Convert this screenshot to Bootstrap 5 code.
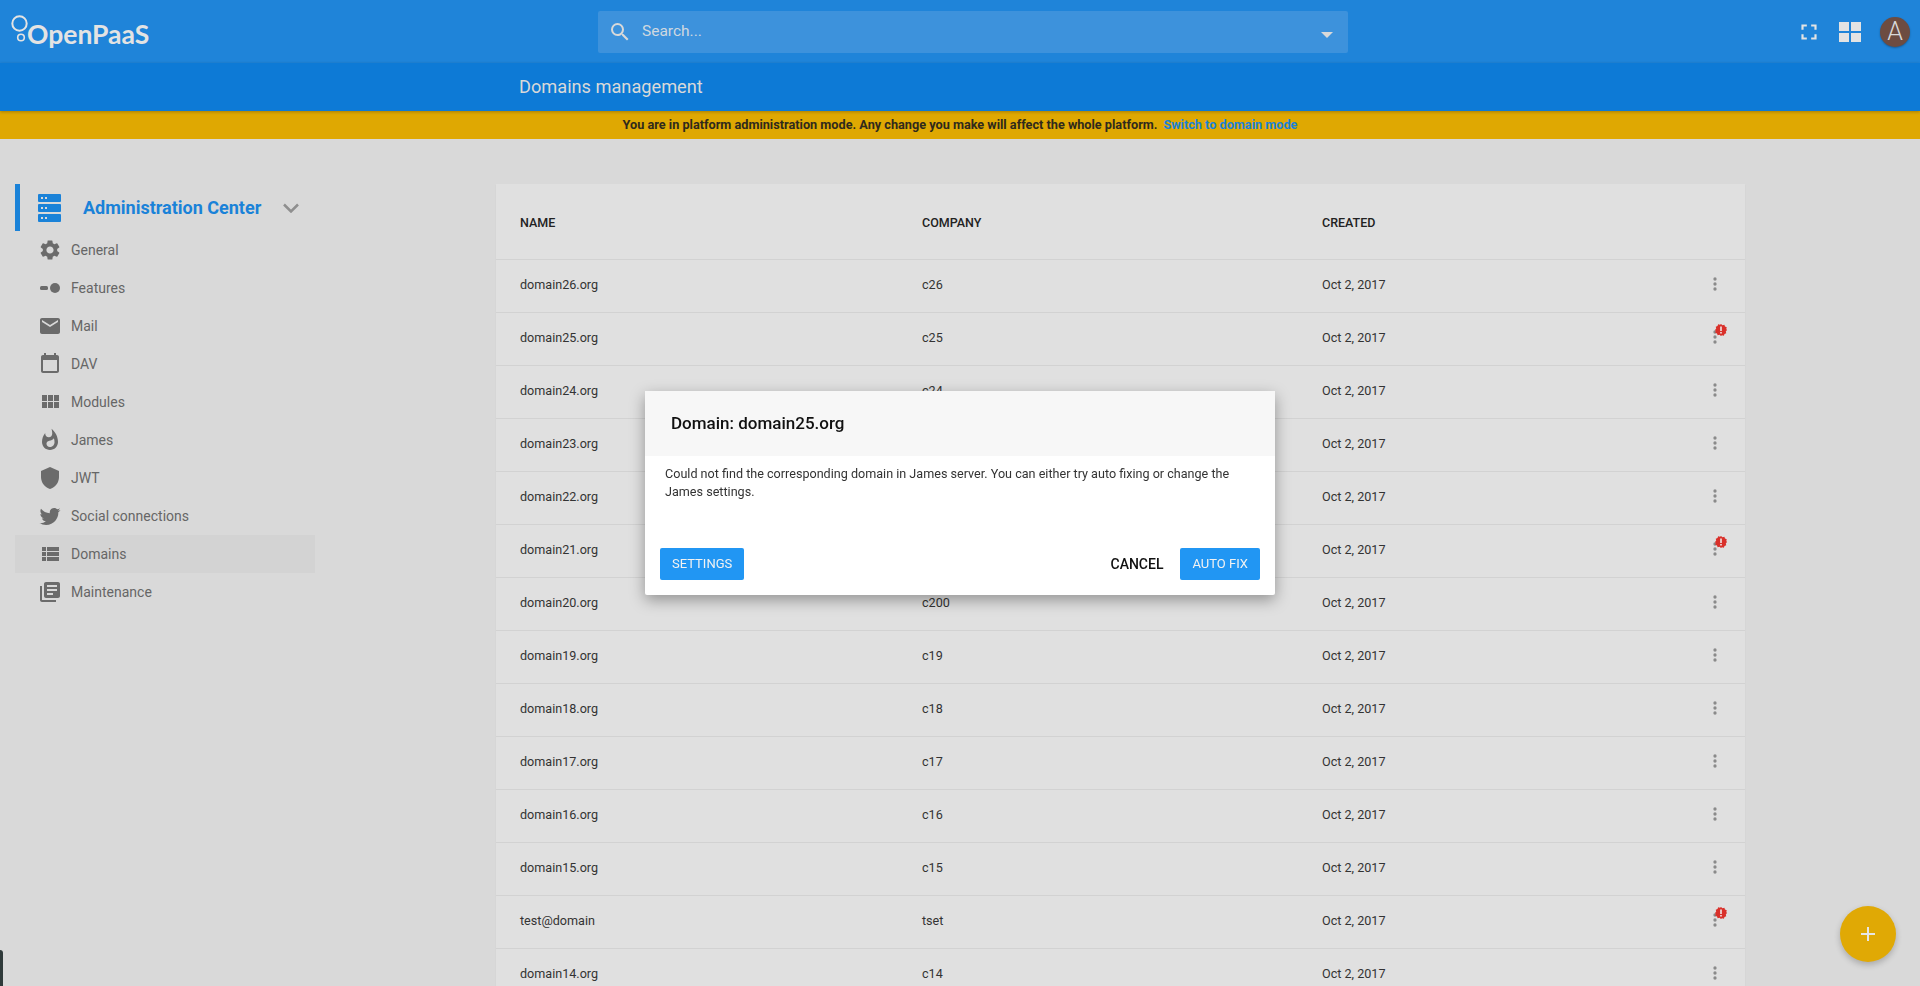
<!DOCTYPE html>
<html lang="en">
<head>
    <meta charset="UTF-8">
    <title>Domains management</title>
    <link rel="stylesheet" href="https://cdn.jsdelivr.net/npm/bootstrap@5.3.3/dist/css/bootstrap.min.css">
    <style>
        html, body {
            height: 100%;
            overflow: hidden;
        }
        body {
            background: #d9d9d9;
            font-family: Roboto, "Liberation Sans", sans-serif;
            font-size: 12.6px;
            color: #333;
        }
        .top-bar {
            height: 63px;
            background: #1f84d9;
        }
        .brand {
            width: 598px;
            height: 63px;
            padding-left: 10px;
        }
        .brand-rings {
            width: 18px;
            height: 36px;
            margin-top: 12px;
            flex: none;
        }
        .brand-name {
            font-family: Lato, "Liberation Sans", sans-serif;
            font-size: 26.500px;
            font-weight: 700;
            line-height: 1;
            margin-top: 21px;
            margin-left: -1px;
            color: #e3e3e3;
        }
        .search-box {
            width: 750px;
            height: 42px;
            background: #3d92dc;
            border-radius: 2px;
            padding: 0 15px 0 10px;
            color: #cfd8e0;
            font-size: 15.5px;
        }
        .search-label {
            margin-left: 2px;
        }
        .search-caret {
            width: 0;
            height: 0;
            border-left: 6px solid transparent;
            border-right: 6px solid transparent;
            border-top: 6px solid #d9d9d9;
            margin-top: 6px;
        }
        .head-icons {
            margin-left: auto;
            padding-right: 10px;
            gap: 19px;
        }
        .head-icons .full-icon {
            margin-right: -2px;
        }
        .round-user {
            width: 30px;
            height: 30px;
            border-radius: 50%;
            background: #6d4c41;
            color: #d9d9d9;
            font-size: 25px;
            font-weight: 300;
            line-height: 30px;
            text-align: center;
            box-shadow: 0 1px 2px rgba(0,0,0,.3);
        }
        .sub-bar {
            height: 48px;
            background: #0d7ad6;
            padding-left: 519px;
            color: #d9d9d9;
            font-size: 18.200px;
            box-shadow: 0 1px 3px rgba(0,0,0,.25);
            position: relative;
        }
        .mode-bar {
            height: 28px;
            background: #dfa802;
            color: #2f2a1c;
            font-weight: 700;
            font-size: 12.700px;
            gap: 6px;
        }
        .mode-bar a {
            color: #1a82d8;
            text-decoration: none;
        }
        .page-body {
            padding: 45px 175px 0 15px;
            gap: 181px;
        }
        .side-menu {
            width: 300px;
            flex: none;
            color: #666;
            font-size: 14px;
        }
        .side-title {
            height: 47px;
            border-left: 5px solid #1a82d8;
            padding-left: 18px;
            color: #1a82d8;
            font-size: 18px;
            font-weight: 700;
        }
        .side-title .title-text {
            margin-left: 22px;
        }
        .side-title .title-chevron {
            margin-left: 22px;
        }
        .side-link {
            height: 38px;
            padding-left: 23px;
            gap: 9px;
            color: #666;
            text-decoration: none;
        }
        .side-link svg {
            width: 24px;
            height: 24px;
            flex: none;
            fill: #6b6b6b;
        }
        .side-link.active-link {
            background: #d3d3d3;
        }
        .domain-card {
            width: 1249px;
            flex: none;
            background: #e0e0e0;
            box-shadow: 0 1px 1px rgba(0,0,0,.08);
        }
        .domain-table {
            --bs-table-bg: transparent;
            --bs-table-color: #333;
            --bs-table-border-color: #d2d2d2;
            margin: 0;
            table-layout: fixed;
            font-size: 12.6px;
        }
        .domain-table th {
            height: 75px;
            padding: 4px 0 0 24px;
            vertical-align: middle;
            font-size: 12.500px;
            font-weight: 500;
            color: #222;
        }
        .domain-table td {
            height: 53px;
            padding: 0 0 0 24px;
            vertical-align: middle;
        }
        .col-name { width: 402px; }
        .col-company { width: 400px; }
        .dots-cell {
            position: relative;
        }
        .dots-cell .dots {
            position: absolute;
            right: 20px;
            top: 50%;
            margin-top: -12px;
            width: 20px;
            height: 20px;
            fill: #8a8a8a;
        }
        .dots-cell .alert-dot {
            position: absolute;
            right: 18px;
            top: 50%;
            margin-top: -15px;
            width: 12px;
            height: 12px;
        }
        .confirm-box {
            position: fixed;
            left: 645px;
            top: 391px;
            width: 630px;
            height: 204px;
            background: #fff;
            border-radius: 2px;
            box-shadow: 0 5px 15px rgba(0,0,0,.35);
        }
        .confirm-head {
            height: 65px;
            background: #f7f7f7;
            padding-left: 26px;
            color: #111;
            font-size: 17px;
            font-weight: 500;
        }
        .confirm-text {
            padding: 9px 20px 0;
            line-height: 18px;
            color: #333;
            font-size: 12.6px;
        }
        .confirm-foot {
            margin-top: auto;
            padding: 0 15px 15px;
        }
        .flat-btn {
            height: 32px;
            padding: 0 12px;
            background: #2196f3;
            color: #f2f2f2;
            border: 0;
            border-radius: 2px;
            font-size: 13px;
        }
        .flat-btn:hover {
            background: #2196f3;
            color: #f2f2f2;
        }
        .plain-btn {
            height: 32px;
            padding: 0;
            margin-right: 17px;
            border: 0;
            font-size: 14px;
            font-weight: 500;
            color: #111;
        }
        .add-fab {
            position: fixed;
            left: 1840px;
            top: 906px;
            width: 56px;
            height: 56px;
            border-radius: 50%;
            background: #e0a905;
            box-shadow: 0 3px 6px rgba(0,0,0,.22);
        }
        .edge-tab {
            position: fixed;
            left: 0;
            top: 950px;
            width: 3px;
            height: 36px;
            background: #2f3a3a;
            border-top-right-radius: 3px;
        }
    </style>
</head>
<body>

<svg width="0" height="0" class="d-none">
    <symbol id="i-more" viewBox="0 0 24 24"><circle cx="12" cy="6" r="2"/><circle cx="12" cy="12" r="2"/><circle cx="12" cy="18" r="2"/></symbol>
    <symbol id="i-alert" viewBox="0 0 24 24"><path fill="#d9302a" d="M12 0l3 2.400 3.700-.9 1.300 3.500 3.500 1.300-.9 3.700L24 12l-2.400 3 .9 3.700-3.500 1.300-1.300 3.500-3.700-.9L12 24l-3-2.400-3.700.9L4 19l-3.500-1.300.9-3.700L0 12l2.400-3-.9-3.700L5 4l1.300-3.500 3.700.9z"/><rect x="10.500" y="5" width="3" height="9" fill="#f2f2f2"/><rect x="10.500" y="16" width="3" height="3" fill="#f2f2f2"/></symbol>
</svg>

<header class="top-bar d-flex align-items-center">
    <div class="brand d-flex align-items-start">
        <svg class="brand-rings" viewBox="0 0 18 36" fill="none" stroke="#e3e3e3">
            <circle cx="9.500" cy="11.500" r="7.200" stroke-width="2"/>
            <circle cx="11" cy="25.500" r="3.300" stroke-width="1.600"/>
        </svg>
        <span class="brand-name">OpenPaaS</span>
    </div>
    <div class="search-box d-flex align-items-center">
        <svg width="24" height="24" viewBox="0 0 24 24" fill="#d9d9d9" class="me-2"><path d="M15.500 14h-.79l-.28-.27A6.471 6.471 0 0 0 16 9.500 6.500 6.500 0 1 0 9.500 16c1.610 0 3.090-.59 4.230-1.570l.27.28v.79l5 4.990L20.490 19l-4.990-5zm-6 0C7.010 14 5 11.990 5 9.500S7.010 5 9.500 5 14 7.010 14 9.500 11.990 14 9.500 14z"/></svg>
        <span class="search-label">Search...</span>
        <span class="search-caret ms-auto"></span>
    </div>
    <div class="head-icons d-flex align-items-center">
        <svg class="full-icon" width="26" height="26" viewBox="0 0 24 24" fill="#e3e3e3"><path d="M7 14H5v5h5v-2H7v-3zm-2-4h2V7h3V5H5v5zm12 7h-3v2h5v-5h-2v3zM14 5v2h3v3h2V5h-5z"/></svg>
        <svg width="22" height="20" viewBox="0 0 22 20" fill="#e3e3e3"><rect width="10" height="9"/><rect x="12" width="10" height="9"/><rect y="11" width="10" height="9"/><rect x="12" y="11" width="10" height="9"/></svg>
        <div class="round-user">A</div>
    </div>
</header>

<div class="sub-bar d-flex align-items-center">Domains management</div>

<div class="mode-bar d-flex align-items-center justify-content-center">
    <span>You are in platform administration mode. Any change you make will affect the whole platform.</span>
    <a href="#">Switch to domain mode</a>
</div>

<main class="page-body d-flex">
    <nav class="side-menu">
        <div class="side-title d-flex align-items-center">
            <svg width="23" height="28" viewBox="0 0 23 28" fill="#1a82d8">
                <rect width="23" height="8" rx="1"/><rect y="10" width="23" height="8" rx="1"/><rect y="20" width="23" height="8" rx="1"/>
                <g fill="#d9d9d9"><rect x="3" y="3" width="2" height="2"/><rect x="7" y="3" width="2" height="2"/><rect x="3" y="13" width="2" height="2"/><rect x="7" y="13" width="2" height="2"/><rect x="3" y="23" width="2" height="2"/><rect x="7" y="23" width="2" height="2"/></g>
            </svg>
            <span class="title-text">Administration Center</span>
            <svg class="title-chevron" width="16" height="10" viewBox="0 0 16 10" fill="none" stroke="#8f8f8f" stroke-width="2.500"><path d="M1 1.500l7 7 7-7"/></svg>
        </div>
        <a class="side-link d-flex align-items-center" href="#">
            <svg viewBox="0 0 24 24"><path d="M19.140 12.940c.04-.3.06-.61.06-.94 0-.32-.02-.64-.07-.94l2.030-1.580a.49.49 0 0 0 .12-.61l-1.920-3.320a.488.488 0 0 0-.59-.22l-2.390.96c-.5-.38-1.030-.7-1.620-.94l-.36-2.540a.484.484 0 0 0-.48-.41h-3.840c-.24 0-.43.17-.47.41l-.36 2.540c-.59.24-1.130.57-1.620.94l-2.390-.96c-.22-.08-.47 0-.59.22L2.740 8.870c-.12.21-.08.47.12.61l2.030 1.580c-.05.3-.09.63-.09.94s.02.64.07.94l-2.030 1.580a.49.49 0 0 0-.12.61l1.920 3.320c.12.22.37.29.59.22l2.390-.96c.5.38 1.030.7 1.620.94l.36 2.540c.05.24.24.41.48.41h3.840c.24 0 .44-.17.47-.41l.36-2.540c.59-.24 1.130-.56 1.620-.94l2.390.96c.22.08.47 0 .59-.22l1.920-3.320c.12-.22.07-.47-.12-.61l-2.010-1.580zM12 15.600c-1.980 0-3.600-1.620-3.600-3.600s1.620-3.600 3.600-3.600 3.600 1.620 3.600 3.600-1.620 3.600-3.600 3.600z"/></svg>
            General
        </a>
        <a class="side-link d-flex align-items-center" href="#">
            <svg viewBox="0 0 24 24"><rect x="2" y="10" width="8" height="4" rx="1.500"/><circle cx="17" cy="12" r="5"/></svg>
            Features
        </a>
        <a class="side-link d-flex align-items-center" href="#">
            <svg viewBox="0 0 24 24"><path d="M20 4H4c-1.100 0-2 .9-2 2v12c0 1.100.9 2 2 2h16c1.100 0 2-.9 2-2V6c0-1.100-.9-2-2-2zm0 4l-8 5-8-5V6l8 5 8-5v2z"/></svg>
            Mail
        </a>
        <a class="side-link d-flex align-items-center" href="#">
            <svg viewBox="0 0 24 24"><path d="M19 3h-1V1h-2v2H8V1H6v2H5c-1.100 0-2 .9-2 2v14c0 1.100.9 2 2 2h14c1.100 0 2-.9 2-2V5c0-1.100-.9-2-2-2zm0 16H5V8h14v11z"/></svg>
            DAV
        </a>
        <a class="side-link d-flex align-items-center" href="#">
            <svg viewBox="0 0 24 24"><path d="M4 11h5V5H4v6zm0 7h5v-6H4v6zm6 0h5v-6h-5v6zm6 0h5v-6h-5v6zm-6-7h5V5h-5v6zm6-6v6h5V5h-5z"/></svg>
            Modules
        </a>
        <a class="side-link d-flex align-items-center" href="#">
            <svg viewBox="0 0 24 24"><path d="M13.500.67s.74 2.650.74 4.800c0 2.060-1.350 3.730-3.410 3.730-2.070 0-3.630-1.670-3.630-3.730l.03-.36C5.210 7.510 4 10.620 4 14c0 4.420 3.580 8 8 8s8-3.580 8-8C20 8.610 17.410 3.800 13.500.67zM11.710 19c-1.780 0-3.220-1.400-3.220-3.140 0-1.620 1.050-2.760 2.810-3.120 1.770-.36 3.600-1.210 4.620-2.580.39 1.290.59 2.650.59 4.040 0 2.650-2.150 4.800-4.800 4.800z"/></svg>
            James
        </a>
        <a class="side-link d-flex align-items-center" href="#">
            <svg viewBox="0 0 24 24"><path d="M12 1L3 5v6c0 5.550 3.840 10.740 9 12 5.160-1.260 9-6.450 9-12V5l-9-4z"/></svg>
            JWT
        </a>
        <a class="side-link d-flex align-items-center" href="#">
            <svg viewBox="0 0 24 24"><path d="M22.460 6c-.77.35-1.600.58-2.460.69.88-.53 1.560-1.370 1.880-2.380-.83.5-1.750.85-2.720 1.050C18.370 4.500 17.260 4 16 4c-2.350 0-4.270 1.920-4.270 4.290 0 .34.04.67.11.98C8.280 9.090 5.110 7.380 3 4.790c-.37.63-.58 1.370-.58 2.150 0 1.490.75 2.810 1.910 3.560-.71 0-1.370-.2-1.950-.5v.03c0 2.080 1.480 3.820 3.440 4.210a4.220 4.220 0 0 1-1.930.07 4.280 4.280 0 0 0 4 2.980 8.521 8.521 0 0 1-5.330 1.840c-.34 0-.68-.02-1.020-.06C3.440 20.290 5.700 21 8.120 21 16 21 20.330 14.460 20.330 8.790c0-.19 0-.37-.01-.56.84-.6 1.560-1.360 2.140-2.230z"/></svg>
            Social connections
        </a>
        <a class="side-link active-link d-flex align-items-center" href="#">
            <svg viewBox="0 0 24 24"><path d="M4 14h4v-4H4v4zm0 5h4v-4H4v4zM4 9h4V5H4v4zm5 5h12v-4H9v4zm0 5h12v-4H9v4zM9 5v4h12V5H9z"/></svg>
            Domains
        </a>
        <a class="side-link d-flex align-items-center" href="#">
            <svg viewBox="0 0 24 24"><path d="M4 6H2v14c0 1.100.9 2 2 2h14v-2H4V6zm16-4H8c-1.100 0-2 .9-2 2v12c0 1.100.9 2 2 2h12c1.100 0 2-.9 2-2V4c0-1.100-.9-2-2-2zm-1 9H9V9h10v2zm-4 4H9v-2h6v2zm4-8H9V5h10v2z"/></svg>
            Maintenance
        </a>
    </nav>

    <section class="domain-card">
        <table class="table domain-table">
            <thead>
                <tr>
                    <th class="col-name">NAME</th>
                    <th class="col-company">COMPANY</th>
                    <th>CREATED</th>
                </tr>
            </thead>
            <tbody id="domain-rows"></tbody>
        </table>
    </section>
</main>

<div class="confirm-box d-flex flex-column">
    <div class="confirm-head d-flex align-items-center">Domain: domain25.org</div>
    <div class="confirm-text">Could not find the corresponding domain in James server. You can either try auto fixing or change the James settings.</div>
    <div class="confirm-foot d-flex align-items-center">
        <button class="btn flat-btn" type="button">SETTINGS</button>
        <button class="btn plain-btn ms-auto" type="button">CANCEL</button>
        <button class="btn flat-btn" type="button">AUTO FIX</button>
    </div>
</div>

<button class="btn add-fab d-flex align-items-center justify-content-center p-0" type="button" aria-label="Add">
    <svg width="14" height="14" viewBox="0 0 14 14" fill="#e6e6e6"><rect x="6" width="2" height="14"/><rect y="6" width="14" height="2"/></svg>
</button>
<div class="edge-tab"></div>

<script>
    const domains = [
        ['domain26.org', 'c26'], ['domain25.org', 'c25', true], ['domain24.org', 'c24'], ['domain23.org', 'c23'],
        ['domain22.org', 'c22'], ['domain21.org', 'c21', true], ['domain20.org', 'c200'], ['domain19.org', 'c19'],
        ['domain18.org', 'c18'], ['domain17.org', 'c17'], ['domain16.org', 'c16'], ['domain15.org', 'c15'],
        ['test@domain', 'tset', true], ['domain14.org', 'c14']
    ];

    document.getElementById('domain-rows').innerHTML = domains.map(function (d) {
        const alertIcon = d[2] ? '<svg class="alert-dot"><use href="#i-alert"/></svg>' : '';
        return '<tr><td>' + d[0] + '</td><td>' + d[1] + '</td>' +
            '<td class="dots-cell">Oct 2, 2017<svg class="dots"><use href="#i-more"/></svg>' + alertIcon + '</td></tr>';
    }).join('');
</script>
<script src="https://cdn.jsdelivr.net/npm/bootstrap@5.3.3/dist/js/bootstrap.bundle.min.js"></script>
</body>
</html>
